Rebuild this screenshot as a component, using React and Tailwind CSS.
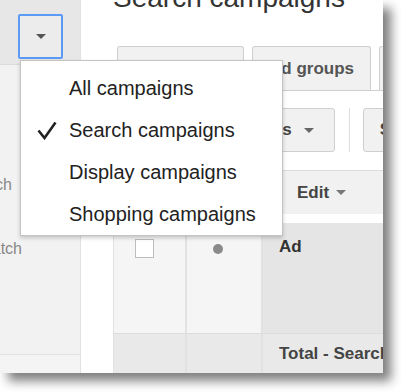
function Caret({ className }) {
  return (
    <svg width="10" height="5" viewBox="0 0 10 5" className={className}>
      <path d="M0 0h10L5 5z" fill="currentColor" />
    </svg>
  );
}

const menuItems = ["All campaigns", "Search campaigns", "Display campaigns", "Shopping campaigns"];

export default function App() {
  return (
    <div className="w-[401px] h-[392px] bg-white font-['Liberation_Sans',Arial,sans-serif]">
      <div className="relative flex w-[383px] h-[373px] overflow-hidden bg-white shadow-[8px_8px_10px_rgba(0,0,0,0.5)]">
        {/* sidebar */}
        <aside className="flex flex-col w-[81px] shrink-0 border-r border-[#e2e2e2] bg-[#f2f2f2]">
          <div className="h-[65px] shrink-0 bg-[#e7e7e7] border-b border-[#dcdcdc] pt-[14px] pl-[18px]">
            <button className="flex items-center justify-center w-[45px] h-[45px] rounded-[2px] border-2 border-[#5b9bf5] bg-[#ececec]">
              <Caret className="text-[#555]" />
            </button>
          </div>
          <div className="flex-1 pt-[110px] text-[16px] leading-[20px] text-[#888]">
            <div className="flex justify-end w-[12px] overflow-hidden whitespace-nowrap">
              <span>Search</span>
            </div>
            <div className="mt-[44px] flex justify-end w-[22px] overflow-hidden whitespace-nowrap">
              <span>Exact match</span>
            </div>
          </div>
          <div className="h-[19px] shrink-0 border-t border-[#e2e2e2] bg-[#f4f4f4]" />
        </aside>

        {/* main */}
        <main className="ml-[32px] flex-1 min-w-0">
          <div className="mt-[-16px] text-[28px] leading-[28px] text-[#333] whitespace-nowrap">
            Search campaigns
          </div>

          {/* tabs */}
          <div className="mt-[34px] flex gap-[8px] pl-[4px] h-[45px] border-b border-[#cfcfcf]">
            <div className="w-[127px] shrink-0 flex items-center justify-center rounded-t-[3px] border border-b-0 border-[#cfcfcf] bg-[#f1f1f1] text-[17px] font-bold text-[#555]">
              Campaigns
            </div>
            <div className="w-[119px] shrink-0 flex items-center justify-center rounded-t-[3px] border border-b-0 border-[#cfcfcf] bg-[#f1f1f1] text-[17px] font-bold text-[#555]">
              Ad groups
            </div>
            <div className="w-[119px] shrink-0 flex items-center justify-center rounded-t-[3px] border border-b-0 border-[#cfcfcf] bg-[#f1f1f1] text-[17px] font-bold text-[#555]">
              Settings
            </div>
          </div>

          {/* toolbar */}
          <div className="mt-[17px] flex h-[44px] text-[17px] font-bold text-[#444]">
            <button className="ml-[12px] w-[80px] shrink-0 flex items-center justify-center rounded-[3px] border border-[#cfcfcf] bg-[#f1f1f1]">
              + AD
            </button>
            <button className="ml-[10px] shrink-0 flex items-center gap-[12px] px-[20px] rounded-[3px] border border-[#cfcfcf] bg-[#f1f1f1]">
              Details
              <Caret className="text-[#666]" />
            </button>
            <div className="ml-[14px] w-px shrink-0 bg-[#dedede]" />
            <button className="ml-[13px] shrink-0 flex items-center gap-[12px] px-[16px] rounded-[3px] border border-[#cfcfcf] bg-[#f1f1f1]">
              Segment
              <Caret className="text-[#666]" />
            </button>
          </div>

          {/* edit row */}
          <div className="mt-[18px] flex items-center h-[44px] border-t border-[#dcdcdc] bg-[#f1f1f1] pl-[184px] text-[17px] font-bold text-[#444]">
            Edit
            <Caret className="ml-[7px] text-[#777]" />
          </div>

          {/* table */}
          <div className="mt-[9px] flex flex-col">
            <div className="flex h-[110px]">
              <div className="w-[74px] shrink-0 border-l border-r-2 border-[#e2e2e2] bg-[#f5f5f5] pl-[21px] pt-[16px]">
                <div className="w-[19px] h-[19px] border border-[#bdbdbd] bg-white" />
              </div>
              <div className="w-[76px] shrink-0 border-r-2 border-[#e2e2e2] bg-[#f5f5f5] pl-[26px] pt-[21px]">
                <div className="w-[10px] h-[10px] rounded-full bg-[#8a8a8a]" />
              </div>
              <div className="flex-1 bg-[#e5e5e5] pl-[16px] pt-[14px] text-[17px] leading-[20px] font-bold text-[#333]">
                Ad
              </div>
            </div>
            <div className="flex h-[40px] border-t border-[#dcdcdc] bg-[#e9e9e9]">
              <div className="w-[74px] shrink-0 border-l border-r-2 border-[#e2e2e2]" />
              <div className="w-[76px] shrink-0 border-r-2 border-[#e2e2e2]" />
              <div className="flex-1 flex items-center pl-[16px] whitespace-nowrap text-[17px] font-bold text-[#444]">
                Total - Search campaigns
              </div>
            </div>
          </div>
        </main>

        {/* dropdown menu */}
        <div className="absolute left-[20px] top-[60px] w-[263px] h-[176px] border border-[#c4c4c4] bg-white py-[6px] shadow-[0_2px_4px_rgba(0,0,0,0.2)]">
          {menuItems.map((item) => (
            <div key={item} className="flex items-center h-[42px] text-[20px] text-[#222] whitespace-nowrap">
              <div className="w-[48px] shrink-0 pl-[16px]">
                {item === "Search campaigns" && (
                  <svg width="20" height="19" viewBox="0 0 20 19">
                    <path d="M1.5 9.5L7.5 17L18.5 1.5" fill="none" stroke="#222" strokeWidth="2.6" />
                  </svg>
                )}
              </div>
              {item}
            </div>
          ))}
        </div>
      </div>
    </div>
  );
}
